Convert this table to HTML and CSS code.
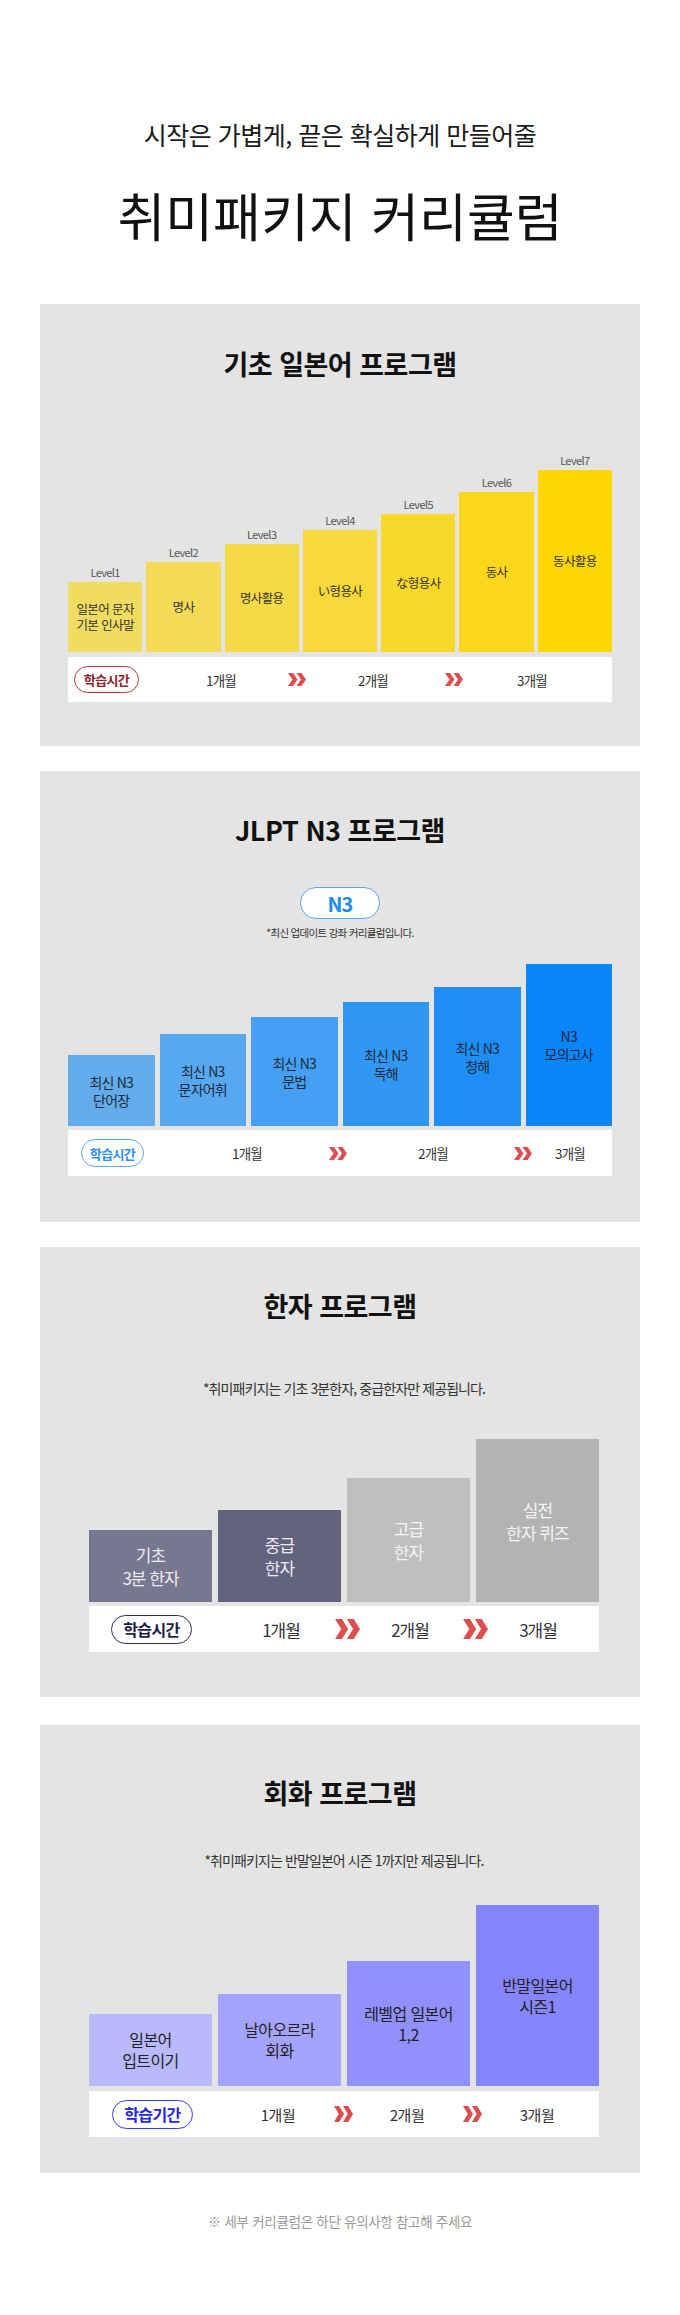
FILE: index.html
```html
<!DOCTYPE html>
<html lang="ko">
<head>
<meta charset="utf-8">
<title>취미패키지 커리큘럼</title>
<link rel="stylesheet" href="styles.css">
</head>
<body>
<main class="page">
  <header class="hero">
    <p class="hero-sub">시작은 가볍게, 끝은 확실하게 만들어줄</p>
    <h1 class="hero-title">취미패키지 커리큘럼</h1>
  </header>

  <section class="program basic">
    <h2 class="program-title">기초 일본어 프로그램</h2>
    <div class="chart">
      <div class="col"><span class="level">Level1</span><div class="bar" style="height:70px">일본어 문자<br>기본 인사말</div></div>
      <div class="col"><span class="level">Level2</span><div class="bar" style="height:90px">명사</div></div>
      <div class="col"><span class="level">Level3</span><div class="bar" style="height:108px">명사활용</div></div>
      <div class="col"><span class="level">Level4</span><div class="bar" style="height:122px">い형용사</div></div>
      <div class="col"><span class="level">Level5</span><div class="bar" style="height:138px">な형용사</div></div>
      <div class="col"><span class="level">Level6</span><div class="bar" style="height:160px">동사</div></div>
      <div class="col"><span class="level">Level7</span><div class="bar" style="height:182px">동사활용</div></div>
    </div>
    <div class="timeline">
      <span class="pill">학습시간</span>
      <span class="month m1">1개월</span>
      <svg class="chev c1" viewBox="0 0 18 13" preserveAspectRatio="none"><polygon points="0,0 5,0 9.5,6.5 5,13 0,13 4.5,6.5"/><polygon points="8.5,0 13.5,0 18,6.5 13.5,13 8.5,13 13,6.5"/></svg>
      <span class="month m2">2개월</span>
      <svg class="chev c2" viewBox="0 0 18 13" preserveAspectRatio="none"><polygon points="0,0 5,0 9.5,6.5 5,13 0,13 4.5,6.5"/><polygon points="8.5,0 13.5,0 18,6.5 13.5,13 8.5,13 13,6.5"/></svg>
      <span class="month m3">3개월</span>
    </div>
  </section>

  <section class="program jlpt">
    <h2 class="program-title">JLPT N3 프로그램</h2>
    <div class="badge">N3</div>
    <p class="note">*최신 업데이트 강좌 커리큘럼입니다.</p>
    <div class="chart">
      <div class="col"><div class="bar" style="height:71px">최신 N3<br>단어장</div></div>
      <div class="col"><div class="bar" style="height:92px">최신 N3<br>문자어휘</div></div>
      <div class="col"><div class="bar" style="height:109px">최신 N3<br>문법</div></div>
      <div class="col"><div class="bar" style="height:124px">최신 N3<br>독해</div></div>
      <div class="col"><div class="bar" style="height:139px">최신 N3<br>청해</div></div>
      <div class="col"><div class="bar" style="height:162px">N3<br>모의고사</div></div>
    </div>
    <div class="timeline">
      <span class="pill">학습시간</span>
      <span class="month m1">1개월</span>
      <svg class="chev c1" viewBox="0 0 18 13" preserveAspectRatio="none"><polygon points="0,0 5,0 9.5,6.5 5,13 0,13 4.5,6.5"/><polygon points="8.5,0 13.5,0 18,6.5 13.5,13 8.5,13 13,6.5"/></svg>
      <span class="month m2">2개월</span>
      <svg class="chev c2" viewBox="0 0 18 13" preserveAspectRatio="none"><polygon points="0,0 5,0 9.5,6.5 5,13 0,13 4.5,6.5"/><polygon points="8.5,0 13.5,0 18,6.5 13.5,13 8.5,13 13,6.5"/></svg>
      <span class="month m3">3개월</span>
    </div>
  </section>

  <section class="program kanji">
    <h2 class="program-title">한자 프로그램</h2>
    <p class="note">*취미패키지는 기초 3분한자, 중급한자만 제공됩니다.</p>
    <div class="chart">
      <div class="col"><div class="bar" style="height:72px">기초<br>3분 한자</div></div>
      <div class="col"><div class="bar" style="height:92px">중급<br>한자</div></div>
      <div class="col"><div class="bar" style="height:124px">고급<br>한자</div></div>
      <div class="col"><div class="bar" style="height:163px">실전<br>한자 퀴즈</div></div>
    </div>
    <div class="timeline">
      <span class="pill">학습시간</span>
      <span class="month m1">1개월</span>
      <svg class="chev c1" viewBox="0 0 18 13" preserveAspectRatio="none"><polygon points="0,0 5,0 9.5,6.5 5,13 0,13 4.5,6.5"/><polygon points="8.5,0 13.5,0 18,6.5 13.5,13 8.5,13 13,6.5"/></svg>
      <span class="month m2">2개월</span>
      <svg class="chev c2" viewBox="0 0 18 13" preserveAspectRatio="none"><polygon points="0,0 5,0 9.5,6.5 5,13 0,13 4.5,6.5"/><polygon points="8.5,0 13.5,0 18,6.5 13.5,13 8.5,13 13,6.5"/></svg>
      <span class="month m3">3개월</span>
    </div>
  </section>

  <section class="program talk">
    <h2 class="program-title">회화 프로그램</h2>
    <p class="note">*취미패키지는 반말일본어 시즌 1까지만 제공됩니다.</p>
    <div class="chart">
      <div class="col"><div class="bar" style="height:72px">일본어<br>입트이기</div></div>
      <div class="col"><div class="bar" style="height:92px">날아오르라<br>회화</div></div>
      <div class="col"><div class="bar" style="height:125px">레벨업 일본어<br>1,2</div></div>
      <div class="col"><div class="bar" style="height:181px">반말일본어<br>시즌1</div></div>
    </div>
    <div class="timeline">
      <span class="pill">학습기간</span>
      <span class="month m1">1개월</span>
      <svg class="chev c1" viewBox="0 0 18 13" preserveAspectRatio="none"><polygon points="0,0 5,0 9.5,6.5 5,13 0,13 4.5,6.5"/><polygon points="8.5,0 13.5,0 18,6.5 13.5,13 8.5,13 13,6.5"/></svg>
      <span class="month m2">2개월</span>
      <svg class="chev c2" viewBox="0 0 18 13" preserveAspectRatio="none"><polygon points="0,0 5,0 9.5,6.5 5,13 0,13 4.5,6.5"/><polygon points="8.5,0 13.5,0 18,6.5 13.5,13 8.5,13 13,6.5"/></svg>
      <span class="month m3">3개월</span>
    </div>
  </section>

  <p class="footnote">※ 세부 커리큘럼은 하단 유의사항 참고해 주세요</p>
</main>
</body>
</html>
```

FILE: styles.css
```css
* { box-sizing: border-box; }

html, body {
  margin: 0;
  padding: 0;
  background: #ffffff;
}

body {
  font-family: "Noto Sans CJK KR", "Noto Sans", sans-serif;
  color: #222;
}

.page {
  width: 680px;
  min-height: 2315px;
  margin: 0 auto;
  padding-top: 116px;
  display: flex;
  flex-direction: column;
  align-items: center;
}

/* hero */
.hero {
  display: flex;
  flex-direction: column;
  align-items: center;
  margin-bottom: 59px;
}
.hero-sub {
  margin: 0;
  font-size: 25px;
  line-height: 36px;
  font-weight: 400;
  letter-spacing: -0.5px;
  color: #1a1a1a;
}
.hero-title {
  margin: 33px 0 0;
  font-size: 52px;
  line-height: 60px;
  font-weight: 400;
  letter-spacing: 0;
  color: #111;
}

/* program boxes */
.program {
  width: 600px;
  background: #e3e4e3;
  display: flex;
  flex-direction: column;
  align-items: center;
  padding: 43px 28px 44px;
  margin: 0 0 25px;
}
.program-title {
  margin: 0;
  font-size: 27px;
  line-height: 34px;
  font-weight: 700;
  letter-spacing: -0.5px;
  color: #111;
}
.note {
  margin: 0;
  color: #333;
}

.chart {
  width: 100%;
  display: flex;
  align-items: flex-end;
  gap: 4px;
}
.col {
  flex: 1 1 0;
  display: flex;
  flex-direction: column;
  align-items: center;
}
.level {
  font-size: 11px;
  line-height: 14px;
  letter-spacing: -0.6px;
  color: #555;
  margin-bottom: 3px;
}
.bar {
  width: 100%;
  display: flex;
  align-items: center;
  justify-content: center;
  text-align: center;
}

.timeline {
  width: 100%;
  height: 45px;
  background: #ffffff;
  display: flex;
  align-items: center;
  margin-top: 5px;
}
.timeline > * { flex: none; }
.pill {
  display: flex;
  align-items: center;
  justify-content: center;
  background: #fff;
  border-radius: 16px;
  font-weight: 700;
  letter-spacing: -0.6px;
}
.month {
  width: 60px;
  text-align: center;
  color: #333;
}
.chev { display: block; fill: #dc4d4f; }

/* ===== section 1: basic (yellow) ===== */
.basic .chart { margin-top: 72px; }
.basic .bar {
  font-size: 12.5px;
  line-height: 16px;
  letter-spacing: -0.6px;
  color: #333;
}
.basic .col:nth-child(1) .bar { background: #f1dc62; }
.basic .col:nth-child(2) .bar { background: #f3db55; }
.basic .col:nth-child(3) .bar { background: #f5da47; }
.basic .col:nth-child(4) .bar { background: #f7d93a; }
.basic .col:nth-child(5) .bar { background: #f9d82c; }
.basic .col:nth-child(6) .bar { background: #fbd71c; }
.basic .col:nth-child(7) .bar { background: #fed600; }
.basic .pill {
  width: 65px; height: 27px;
  border: 1.5px solid #a83b3d;
  color: #8d2629;
  font-size: 13px;
  margin-left: 6px;
}
.basic .month { font-size: 13.5px; letter-spacing: -0.8px; }
.basic .chev { width: 18px; height: 13px; }
.basic .m1 { margin-left: 52px; }
.basic .c1 { margin-left: 37px; }
.basic .m2 { margin-left: 37px; }
.basic .c2 { margin-left: 42px; }
.basic .m3 { margin-left: 39px; }

/* ===== section 2: JLPT (blue) ===== */
.jlpt { padding: 42px 28px 46px; }
.badge {
  margin-top: 40px;
  width: 80px;
  height: 32px;
  border: 1.5px solid #55a6f3;
  border-radius: 16px;
  background: #fff;
  display: flex;
  align-items: center;
  justify-content: center;
  font-size: 20px;
  font-weight: 700;
  letter-spacing: -1px;
  color: #1a8cf0;
}
.jlpt .note {
  margin-top: 7px;
  font-size: 10.5px;
  line-height: 14px;
  letter-spacing: -0.7px;
}
.jlpt .chart { margin-top: 24px; gap: 5px; }
.jlpt .bar {
  font-size: 14px;
  line-height: 18px;
  letter-spacing: -0.8px;
  color: #1e2a3a;
}
.jlpt .col:nth-child(1) .bar { background: #63aceb; }
.jlpt .col:nth-child(2) .bar { background: #58a8f1; }
.jlpt .col:nth-child(3) .bar { background: #45a0f3; }
.jlpt .col:nth-child(4) .bar { background: #3197f4; }
.jlpt .col:nth-child(5) .bar { background: #1e8ef6; }
.jlpt .col:nth-child(6) .bar { background: #0a85fc; }
.jlpt .timeline { margin-top: 4px; height: 46px; }
.jlpt .pill {
  width: 63px; height: 28px;
  border: 1.5px solid #5aaaf2;
  color: #2d8fe6;
  font-size: 13px;
  margin-left: 13px;
}
.jlpt .month { font-size: 13.5px; letter-spacing: -0.8px; }
.jlpt .chev { width: 18px; height: 13px; }
.jlpt .m1 { margin-left: 73px; }
.jlpt .c1 { margin-left: 52px; }
.jlpt .m2 { margin-left: 56px; }
.jlpt .c2 { margin-left: 51px; }
.jlpt .m3 { margin-left: 8px; }

/* ===== section 3: kanji (gray) ===== */
.kanji { padding: 42px 41px 45px 49px; }
.kanji .program-title { margin-left: -8px; }
.kanji .note {
  margin-top: 55px;
  font-size: 14px;
  line-height: 20px;
  letter-spacing: -0.9px;
}
.kanji .chart { margin-top: 41px; gap: 6px; }
.kanji .bar {
  font-size: 17px;
  line-height: 23px;
  font-weight: 400;
  letter-spacing: -1px;
  color: #eceaf2;
}
.kanji .col:nth-child(1) .bar { background: #77778f; }
.kanji .col:nth-child(2) .bar { background: #63637f; }
.kanji .col:nth-child(3) .bar { background: #bfbfbf; color: #f3f3f3; }
.kanji .col:nth-child(4) .bar { background: #b3b3b3; color: #f3f3f3; }
.kanji .timeline { margin-top: 4px; height: 46px; }
.kanji .pill {
  width: 81px; height: 29px;
  border: 1.5px solid #2b2b58;
  color: #1f1f4a;
  font-size: 16px;
  margin-left: 22px;
}
.kanji .month { font-size: 17px; letter-spacing: -1px; }
.kanji .chev { width: 25px; height: 20px; }
.kanji .m1 { margin-left: 59px; }
.kanji .c1 { margin-left: 23.5px; }
.kanji .m2 { margin-left: 20.5px; }
.kanji .c2 { margin-left: 22.5px; }
.kanji .m3 { margin-left: 20.5px; }

/* ===== section 4: talk (purple) ===== */
.talk { padding: 51px 41px 36px 49px; margin-top: 3px; }
.talk .program-title { margin-left: -8px; }
.talk .note {
  margin-top: 40px;
  font-size: 14px;
  line-height: 20px;
  letter-spacing: -0.9px;
}
.talk .chart { margin-top: 35px; gap: 6px; }
.talk .bar {
  font-size: 16px;
  line-height: 21px;
  letter-spacing: -0.6px;
  color: #222;
}
.talk .col:nth-child(1) .bar { background: #b9b9fd; }
.talk .col:nth-child(2) .bar { background: #a4a4fd; }
.talk .col:nth-child(3) .bar { background: #9191fd; }
.talk .col:nth-child(4) .bar { background: #8585fd; }
.talk .timeline { margin-top: 5px; height: 46px; }
.talk .pill {
  width: 81px; height: 29px;
  border: 1.5px solid #3b3bf0;
  color: #2626e6;
  font-size: 16px;
  margin-left: 23px;
}
.talk .month { font-size: 15px; letter-spacing: -0.5px; }
.talk .chev { width: 19px; height: 16px; }
.talk .m1 { margin-left: 55px; }
.talk .c1 { margin-left: 25.5px; }
.talk .m2 { margin-left: 24.5px; }
.talk .c2 { margin-left: 25.5px; }
.talk .m3 { margin-left: 25.5px; }

.footnote {
  margin: 13px 0 0;
  font-size: 13.5px;
  line-height: 20px;
  letter-spacing: -0.3px;
  color: #9a9a9a;
}
```
